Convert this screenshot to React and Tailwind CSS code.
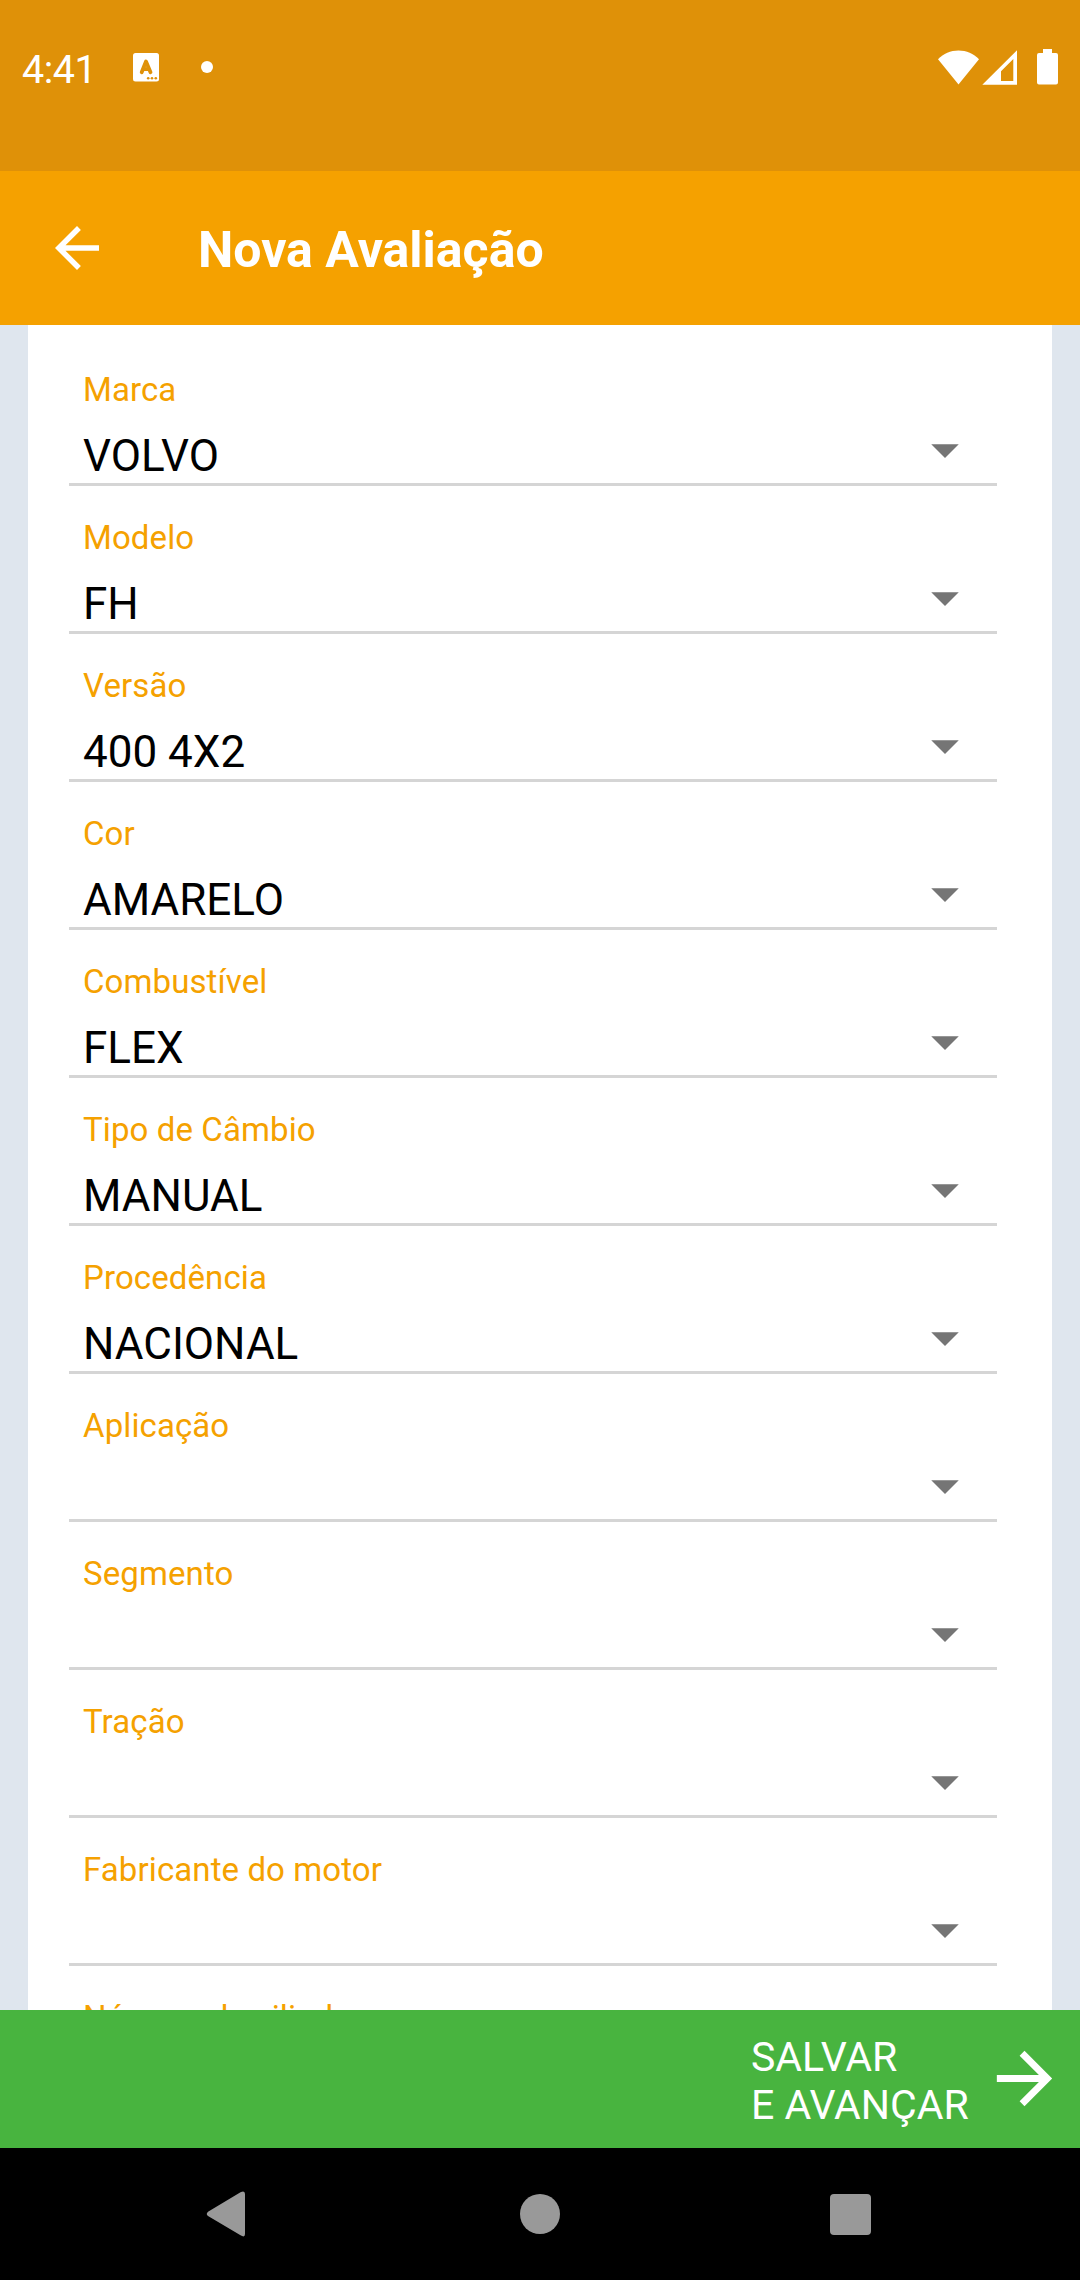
const fields = [
  { label: "Marca", value: "VOLVO" },
  { label: "Modelo", value: "FH" },
  { label: "Versão", value: "400 4X2" },
  { label: "Cor", value: "AMARELO" },
  { label: "Combustível", value: "FLEX" },
  { label: "Tipo de Câmbio", value: "MANUAL" },
  { label: "Procedência", value: "NACIONAL" },
  { label: "Aplicação", value: "" },
  { label: "Segmento", value: "" },
  { label: "Tração", value: "" },
  { label: "Fabricante do motor", value: "" },
  { label: "Número de cilindros", value: "" },
];

function StatusBar() {
  return (
    <div className="flex h-[171px] shrink-0 items-start bg-[#df9108] pt-[46px] pr-[22px] pl-[22px] text-white">
      <span className="mt-px w-[111px] text-[39.5px] leading-[46px] tracking-[-0.5px]">4:41</span>
      <svg className="mt-[7px] h-[29px] w-[26px]" viewBox="0 0 26 29">
        <rect width="26" height="28.5" rx="2.5" fill="#fff" />
        <path d="M8.700 19.200 13 8.400 17.500 19.200M10.500 16.200h5" fill="none" stroke="#df9108" strokeWidth="3.8" strokeLinecap="round" strokeLinejoin="round" />
        <circle cx="15.200" cy="25.200" r="1.300" fill="#df9108" />
        <circle cx="19" cy="25.200" r="1.300" fill="#df9108" />
        <circle cx="22.800" cy="25.200" r="1.300" fill="#df9108" />
      </svg>
      <span className="mt-[15px] ml-[42px] size-3 rounded-full bg-white" />
      <svg className="mt-[4px] ml-auto h-[35px] w-[41px]" viewBox="0 0 41 35">
        <path d="M20.500 34.500 0 9.300C5.500 3.500 12.500 .4 20.500 .4S35.500 3.500 41 9.300z" fill="#fff" />
      </svg>
      <svg className="mt-[4px] ml-[3px] h-[35px] w-[35px]" viewBox="0 0 35 35">
        <path fillRule="evenodd" d="M35 .3V34.700H.3zM31.300 9 19 21.300V31H31.300z" fill="#fff" />
      </svg>
      <svg className="mt-[3px] ml-[20px] h-[36px] w-[21px]" viewBox="0 0 21 36">
        <path d="M6 0h9v4h4a2 2 0 0 1 2 2v27.500a2 2 0 0 1-2 2H2a2 2 0 0 1-2-2V6a2 2 0 0 1 2-2h4z" fill="#fff" />
      </svg>
    </div>
  );
}

function AppBar() {
  return (
    <header className="flex h-[154px] shrink-0 items-center bg-[#f5a100] pl-[44px] text-white">
      <svg className="size-[66px]" viewBox="0 0 24 24" fill="currentColor">
        <path d="M20 11H7.830l5.590-5.590L12 4l-8 8 8 8 1.410-1.410L7.830 13H20v-2z" />
      </svg>
      <h1 className="mt-[4px] ml-[88px] text-[50px] leading-[60px] font-bold">Nova Avaliação</h1>
    </header>
  );
}

function SelectField({ label, value }) {
  return (
    <div className="h-[148px] shrink-0 border-b-[3px] border-[#d5d5d5] pt-8 pr-[38px] pl-[14px]">
      <div className="h-10 text-[33px] leading-10 tracking-[0.1px] text-[#f5a100]">{label}</div>
      <div className="mt-5 flex h-[52px] justify-between text-[44px] leading-[52px] text-black">
        <span>{value}</span>
        <svg className="mt-[14px] h-[14px] w-[28px]" viewBox="0 0 28 14">
          <path d="M.25 .25h27.500L14 14z" fill="#757575" />
        </svg>
      </div>
    </div>
  );
}

export default function App() {
  return (
    <div className="flex h-[2280px] w-[1080px] flex-col overflow-hidden bg-[#dfe6ee] font-['Roboto',sans-serif]">
      <StatusBar />
      <AppBar />
      <main className="mx-7 flex min-h-0 flex-1 flex-col overflow-hidden bg-white pt-[13px] pr-[55px] pl-[41px]">
        {fields.map((f) => (
          <SelectField key={f.label} label={f.label} value={f.value} />
        ))}
      </main>
      <button className="flex h-[138px] shrink-0 items-center justify-end bg-[#48b43f] pr-[14px] text-left text-white">
        <span className="mt-[3px] w-[232px] text-[41px] leading-[48px] whitespace-nowrap">
          SALVAR
          <br />E AVANÇAR
        </span>
        <svg className="mb-px size-[83px]" viewBox="0 0 24 24" fill="currentColor">
          <path d="M12 4l-1.410 1.410L16.170 11H4v2h12.170l-5.580 5.590L12 20l8-8z" />
        </svg>
      </button>
      <nav className="flex h-[132px] shrink-0 items-center justify-between bg-black pr-[209px] pl-[206px]">
        <svg className="h-[46px] w-[40px]" viewBox="0 0 40 46" fill="#999">
          <path d="M34.500 1.200Q39 -1 39 3V43Q39 47 34.500 44.300L2 25Q-.5 23 2 20.700z" />
        </svg>
        <span className="ml-[3px] size-10 rounded-full bg-[#999]" />
        <span className="h-[41px] w-[41px] rounded-[4px] bg-[#999]" />
      </nav>
    </div>
  );
}
